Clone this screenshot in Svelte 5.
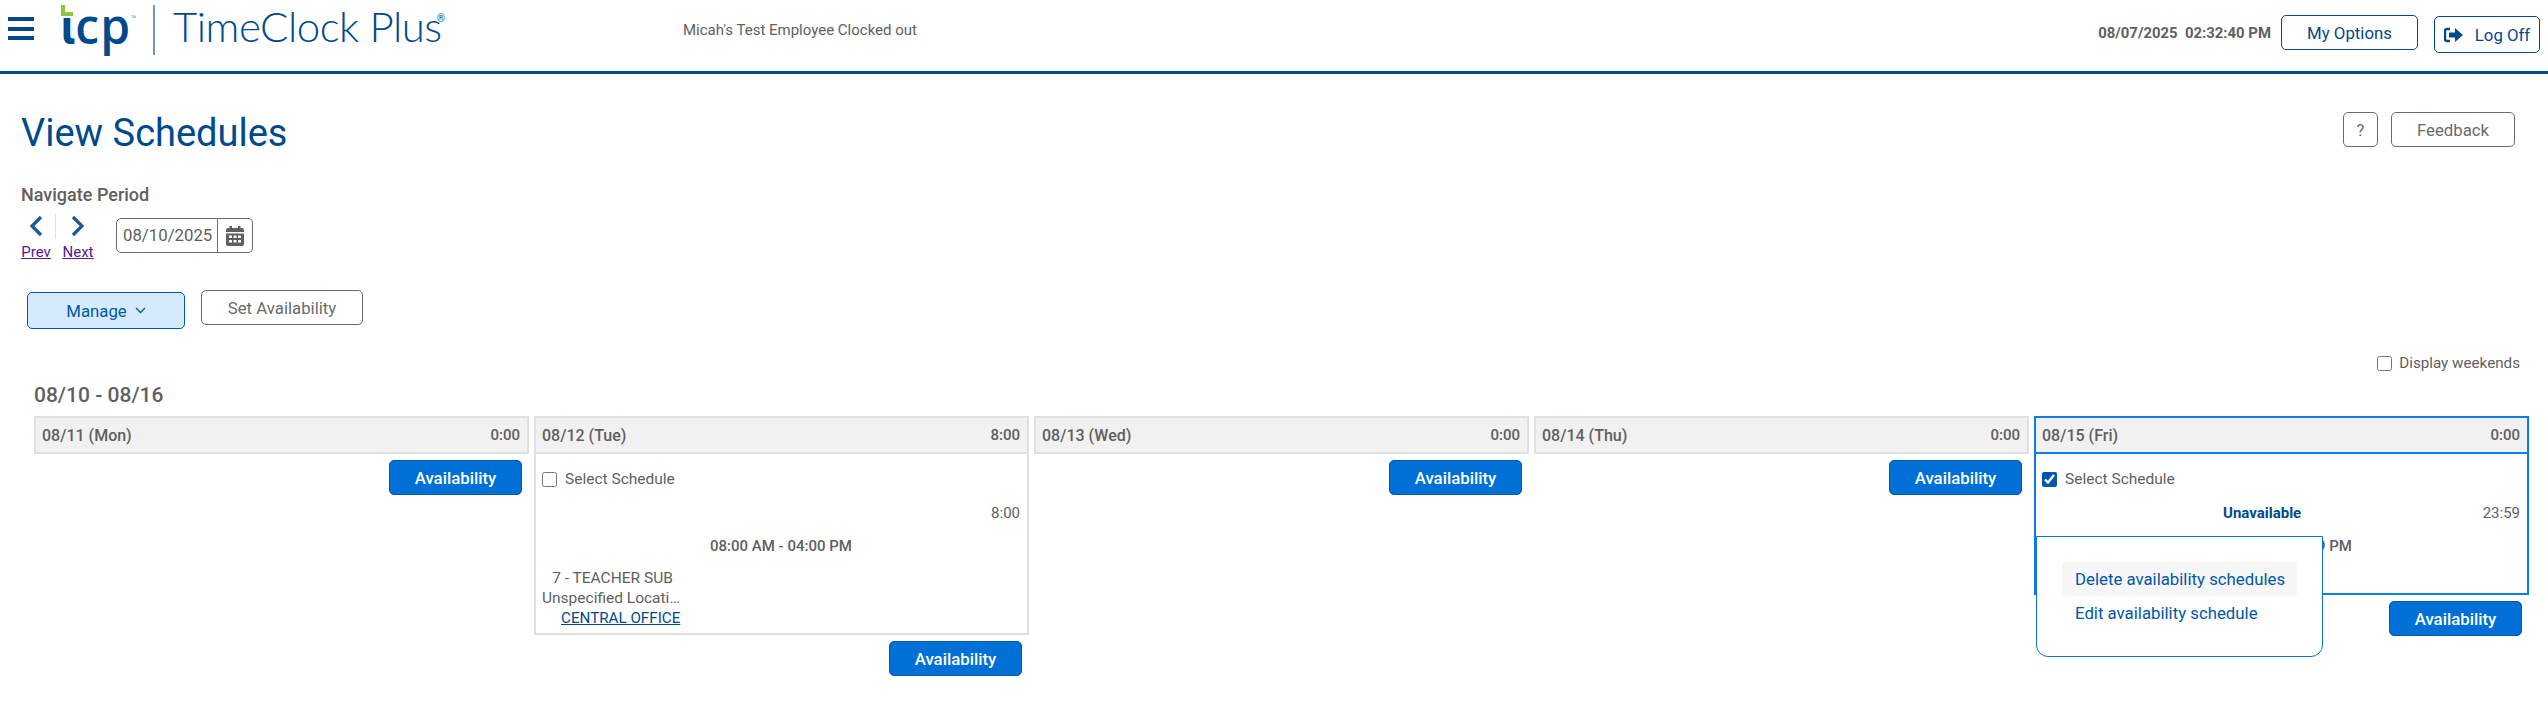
<script>
  const days = [
    { label: '08/11 (Mon)', total: '0:00' },
    { label: '08/12 (Tue)', total: '8:00', shift: true },
    { label: '08/13 (Wed)', total: '0:00' },
    { label: '08/14 (Thu)', total: '0:00' },
    { label: '08/15 (Fri)', total: '0:00', unavailable: true }
  ];
</script>

<div class="page">
  <header class="top">
    <button class="burger" aria-label="Menu"><span></span><span></span><span></span></button>
    <div class="logo">
      <svg class="sprout" width="12" height="11" viewBox="0 0 12 11"><path d="M0 0h4v7h8v4H0z" fill="#8cc63f"/></svg>
      <span class="tcp">ɩcp</span><span class="tm">™</span>
      <span class="rule"></span>
      <span class="brand">TimeClock Plus</span><span class="reg">®</span>
    </div>
    <div class="msg">Micah's Test Employee Clocked out</div>
    <div class="clock">08/07/2025&nbsp;&nbsp;02:32:40 PM</div>
    <button class="navbtn options">My Options</button>
    <button class="navbtn logoff">
      <svg width="20" height="16" viewBox="0 0 20 16"><path d="M6 2H3a2 2 0 0 0-2 2v8a2 2 0 0 0 2 2h3" fill="none" stroke="#004a8c" stroke-width="2.4"/><path d="M5 5.500h6V1l8 7-8 7v-4.500H5z" fill="#004a8c"/></svg>
      Log Off
    </button>
  </header>

  <div class="titlerow">
    <h1>View Schedules</h1>
    <div class="tools">
      <button class="ghost help">?</button>
      <button class="ghost feedback">Feedback</button>
    </div>
  </div>

  <div class="navigate">
    <div class="navlabel">Navigate Period</div>
    <div class="navrow">
      <div class="pager">
        <a href="#prev" class="pg prev">
          <svg width="16" height="22" viewBox="0 0 16 22"><path d="M13 2 4 11l9 9" fill="none" stroke="#1c5a94" stroke-width="3.200"/></svg>
          <span>Prev</span>
        </a>
        <span class="sep"></span>
        <a href="#next" class="pg next">
          <svg width="16" height="22" viewBox="0 0 16 22"><path d="m3 2 9 9-9 9" fill="none" stroke="#1c5a94" stroke-width="3.200"/></svg>
          <span>Next</span>
        </a>
      </div>
      <div class="dateinput">08/10/2025</div>
      <button class="calbtn" aria-label="Calendar">
        <svg width="18" height="20" viewBox="0 0 18 20"><path d="M3.500 0h2.500v2h6V0h2.500v2H16a2 2 0 0 1 2 2v2H0V4a2 2 0 0 1 2-2h1.500zM0 7.500h18V18a2 2 0 0 1-2 2H2a2 2 0 0 1-2-2z" fill="#5f5f5f"/><g fill="#fff"><rect x="3" y="9.500" width="3" height="2.500"/><rect x="7.500" y="9.500" width="3" height="2.500"/><rect x="12" y="9.500" width="3" height="2.500"/><rect x="3" y="14" width="3" height="2.500"/><rect x="7.500" y="14" width="3" height="2.500"/><rect x="12" y="14" width="3" height="2.500"/></g></svg>
      </button>
    </div>
  </div>

  <div class="actions">
    <button class="manage">Manage
      <svg width="11" height="7" viewBox="0 0 11 7"><path d="m1 1 4.500 4.500L10 1" fill="none" stroke="#0058a8" stroke-width="1.300"/></svg>
    </button>
    <button class="ghost setavail">Set Availability</button>
  </div>

  <label class="weekends"><input type="checkbox" /> Display weekends</label>

  <div class="range">08/10 - 08/16</div>

  <div class="week">
    {#each days as d}
      <div class="col" class:active={d.unavailable}>
        <div class="dayhead"><span>{d.label}</span><span class="total">{d.total}</span></div>
        {#if d.shift}
          <div class="card">
            <label class="sel"><input type="checkbox" /> Select Schedule</label>
            <div class="hours">8:00</div>
            <div class="span">08:00 AM - 04:00 PM</div>
            <div class="meta">
              <div class="job">7 - TEACHER SUB</div>
              <div class="loc">Unspecified Locati…</div>
              <a href="#office" class="office">CENTRAL OFFICE</a>
            </div>
          </div>
        {/if}
        {#if d.unavailable}
          <div class="card fri">
            <label class="sel"><input type="checkbox" checked /> Select Schedule</label>
            <div class="hours una"><b>Unavailable</b><span>23:59</span></div>
            <div class="span">12:00 AM - 11:59 PM</div>
          </div>
        {/if}
        <div class="availrow"><button class="avail">Availability</button></div>
        {#if d.unavailable}
          <div class="popup">
            <div class="item hover">Delete availability schedules</div>
            <div class="item">Edit availability schedule</div>
          </div>
        {/if}
      </div>
    {/each}
  </div>
</div>

<style>
  :global(body) { margin: 0; background: #fff; }
  .page { width: 2548px; height: 705px; overflow: hidden; font-family: Roboto, "Liberation Sans", sans-serif; font-size: 16px; color: #5f5f5f; position: relative; }
  button { font-family: inherit; font-size: 16.800px; background: #fff; cursor: pointer; padding: 0; }
  .top { height: 71px; border-bottom: 3px solid #004a8c; display: flex; align-items: flex-start; box-sizing: content-box; }
  .burger { width: 26px; margin: 17px 0 0 8px; border: 0; display: flex; flex-direction: column; gap: 5.500px; }
  .burger span { display: block; height: 4px; width: 26px; background: #004a8c; }
  .logo { position: relative; margin-left: 27px; height: 58px; width: 410px; display: flex; align-items: flex-start; color: #004a8c; }
  .sprout { position: absolute; left: 0; top: 5px; }
  .tcp { font-family: "Open Sans", sans-serif; font-weight: 600; font-size: 48px; line-height: 52px; letter-spacing: 1px; }
  .tm { font-size: 9px; line-height: 10px; margin-top: 14px; color: #7f93a8; }
  .rule { position: absolute; left: 92px; top: 5px; width: 2px; height: 50px; background: #6f97c0; }
  .brand { position: absolute; left: 112px; top: 3px; font-family: Lato, sans-serif; font-weight: 300; font-size: 42px; line-height: 1.1; white-space: nowrap; letter-spacing: -.5px; }
  .reg { position: absolute; left: 376px; top: 13px; font-size: 10px; }
  .msg { margin: 22px 0 0 212px; font-size: 15px; line-height: 17px; flex: 1; }
  .clock { margin-top: 25px; font-size: 14.900px; line-height: 17px; font-weight: 700; margin-right: 10px; }
  .navbtn { height: 35px; border: 1px solid #004a8c; border-radius: 5px; color: #004a8c; }
  .options { width: 137px; margin-top: 15px; margin-right: 16px; }
  .logoff { width: 106px; height: 37px; margin-top: 16px; margin-right: 8px; display: flex; align-items: center; justify-content: center; gap: 11px; }
  .titlerow { display: flex; justify-content: space-between; padding: 36px 33px 0 21px; height: 78px; box-sizing: border-box; }
  h1 { margin: 0; font-weight: 400; font-size: 38px; line-height: 47px; color: #004a8c; }
  .tools { display: flex; gap: 13px; align-items: flex-start; margin-top: 2px; }
  .ghost { border: 1px solid #6b6b6b; border-radius: 5px; color: #6b6b6b; height: 35px; }
  .help { width: 35px; }
  .feedback { width: 124px; }
  .navigate { padding-left: 21px; margin-top: 32px; }
  .navlabel { font-weight: 500; font-size: 18px; line-height: 21px; }
  .navrow { display: flex; align-items: flex-start; margin-top: 6px; }
  .pager { display: flex; width: 95px; align-items: flex-start; }
  .pg { display: flex; flex-direction: column; align-items: center; color: #551a8b; font-size: 15px; line-height: 18px; }
  .prev { width: 30px; }
  .next { width: 32px; }
  .pg span { text-decoration: underline; margin-top: 6px; }
  .pg svg { margin-top: 4px; }
  .sep { width: 1px; height: 25px; background: #e0e0e0; margin: 3px 6px 0 4px; }
  .dateinput { width: 102px; height: 35px; box-sizing: border-box; border: 1px solid #6b6b6b; border-radius: 5px 0 0 5px; margin-top: 7px; line-height: 33px; padding-left: 6px; font-size: 16.800px; }
  .calbtn { width: 35px; height: 35px; border: 1px solid #6b6b6b; border-left: 0; border-radius: 0 5px 5px 0; margin-top: 7px; display: flex; align-items: center; justify-content: center; }
  .actions { display: flex; align-items: flex-start; gap: 16px; padding-left: 27px; margin-top: 29px; }
  .manage { width: 158px; height: 37px; background: #d5eafd; border: 1px solid #0058a8; border-radius: 5px; color: #0058a8; margin-top: 2px; display: flex; align-items: center; justify-content: center; gap: 8px; }
  .setavail { width: 162px; }
  .weekends { display: flex; align-items: center; gap: 7px; justify-content: flex-end; padding-right: 28px; font-size: 15.200px; margin-top: 26px; line-height: 17px; }
  input[type=checkbox] { width: 15px; height: 15px; margin: 0; accent-color: #0058a8; }
  .range { margin: 11px 0 0 34px; font-weight: 500; font-size: 21px; line-height: 24px; }
  .week { display: grid; grid-template-columns: repeat(5, 495px); gap: 5px; padding-left: 34px; margin-top: 9px; align-items: start; }
  .col { position: relative; }
  .dayhead { height: 38px; box-sizing: border-box; background: #f1f1f1; border: 2px solid #e0e0e0; display: flex; justify-content: space-between; align-items: center; padding: 0 7px 0 6px; font-weight: 500; font-size: 16px; }
  .total { font-size: 15px; }
  .card { border: 2px solid #e0e0e0; border-top: 0; padding: 15px 7px 5px 6px; font-size: 15.500px; line-height: 20px; box-sizing: border-box; }
  .sel { display: flex; align-items: center; gap: 8px; height: 20px; }
  .hours { text-align: right; margin-top: 14px; font-size: 15px; }
  .span { text-align: center; font-weight: 500; font-size: 15px; margin-top: 13px; }
  .meta { width: 136px; margin-top: 12px; text-align: center; }
  .job { padding-left: 5px; }
  .loc { white-space: nowrap; }
  .office { color: #004a8c; display: block; white-space: nowrap; text-align: left; padding-left: 19px; font-size: 15.200px; }
  .availrow { display: flex; justify-content: flex-end; padding: 6px 7px 0 0; }
  .avail { width: 133px; height: 35px; background: #006fd6; border: 1px solid #0058a8; border-radius: 5px; color: #fff; font-weight: 500; font-size: 16.800px; }
  .col.active .dayhead { border-color: #0a7cf0; }
  .card.fri { border-color: #0a7cf0; height: 141px; }
  .una { display: flex; justify-content: space-between; padding-left: 181px; }
  .una b { color: #004a8c; font-weight: 700; }
  .popup { position: absolute; left: 2px; top: 120px; width: 287px; height: 121px; box-sizing: border-box; background: #fff; border: 1px solid #0a72d8; border-radius: 0 0 12px 12px; padding: 25px 25px 0 25px; color: #0058a8; font-size: 16.800px; }
  .item { height: 34px; line-height: 34px; padding-left: 13px; width: 235px; box-sizing: border-box; }
  .item.hover { background: #f7f7f7; }
</style>
